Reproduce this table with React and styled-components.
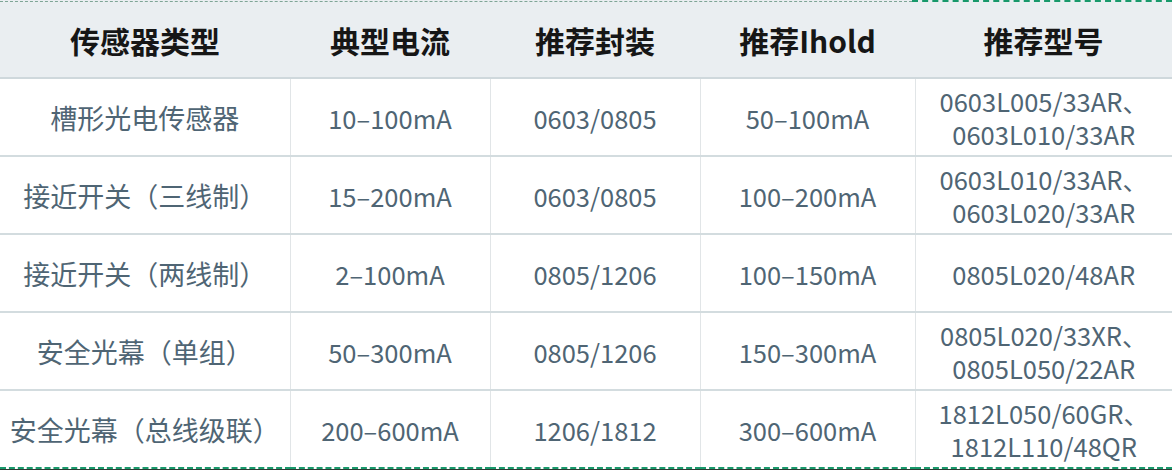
import styled, { createGlobalStyle } from "styled-components";

const GlobalStyle = createGlobalStyle`
  html, body {
    margin: 0;
    padding: 0;
    background: #ffffff;
  }
  body {
    font-family: "Noto Sans CJK SC", "Noto Sans", sans-serif;
  }
`;

const columns = [
  { title: "传感器类型", width: 290 },
  { title: "典型电流", width: 200 },
  { title: "推荐封装", width: 210 },
  { title: "推荐Ihold", width: 215 },
  { title: "推荐型号", width: 257 },
];

const rows = [
  ["槽形光电传感器", "10–100mA", "0603/0805", "50–100mA", ["0603L005/33AR、", "0603L010/33AR"]],
  ["接近开关（三线制）", "15–200mA", "0603/0805", "100–200mA", ["0603L010/33AR、", "0603L020/33AR"]],
  ["接近开关（两线制）", "2–100mA", "0805/1206", "100–150mA", ["0805L020/48AR"]],
  ["安全光幕（单组）", "50–300mA", "0805/1206", "150–300mA", ["0805L020/33XR、", "0805L050/22AR"]],
  ["安全光幕（总线级联）", "200–600mA", "1206/1812", "300–600mA", ["1812L050/60GR、", "1812L110/48QR"]],
];

export default function App() {
  return (
    <>
      <GlobalStyle />
      <S.Frame>
        <S.TopEdge>
          <S.ThinDash />
          <S.ThickDash />
        </S.TopEdge>
        <S.Table>
          <colgroup>
            {columns.map(c => <S.Col key={c.title} $w={c.width} />)}
          </colgroup>
          <thead>
            <tr>
              {columns.map(c => <S.Th key={c.title}>{c.title}</S.Th>)}
            </tr>
          </thead>
          <tbody>
            {rows.map((row, i) => (
              <S.Tr key={i}>
                {row.map((cell, j) => (
                  <S.Td key={j} $cjk={j === 0}>
                    {Array.isArray(cell)
                      ? cell.map((line, k) => <S.Line key={k}>{line}</S.Line>)
                      : cell}
                  </S.Td>
                ))}
              </S.Tr>
            ))}
          </tbody>
        </S.Table>
      </S.Frame>
    </>
  );
}

const S = {};

S.Frame = styled.div`
  width: 1172px;
  height: 470px;
  overflow: hidden;
  border-bottom: 1px solid #2c3a33;
  box-sizing: border-box;
`;

S.TopEdge = styled.div`
  display: flex;
  height: 2px;
  background: #eaeef1;
`;

S.ThinDash = styled.div`
  width: 912px;
  height: 1px;
  border-bottom: 1px dashed #7fa596;
`;

S.ThickDash = styled.div`
  flex: 1;
  border-top: 2px dashed #18996b;
`;

S.Table = styled.table`
  width: 1172px;
  table-layout: fixed;
  border-collapse: collapse;
  border-spacing: 0;
  border-bottom: 3px dashed #18996b;
`;

S.Col = styled.col`
  width: ${p => p.$w}px;
`;

S.Th = styled.th`
  height: 75px;
  padding: 0;
  background: #eaeef1;
  border-bottom: 2px solid #cfd8dc;
  color: #161616;
  font-size: 30px;
  font-weight: 700;
  text-align: center;
  vertical-align: middle;
`;

S.Tr = styled.tr`
  border-bottom: 2px solid #d3dcdf;
  &:last-child {
    border-bottom: none;
  }
`;

S.Td = styled.td`
  height: 76px;
  padding: 0;
  border-left: 1px solid #e1e5e7;
  color: #4f6574;
  font-size: ${p => (p.$cjk ? "27px" : "25.5px")};
  line-height: 33px;
  text-align: center;
  vertical-align: middle;
  &:first-child {
    border-left: none;
  }
`;

S.Line = styled.div`
  white-space: nowrap;
`;
